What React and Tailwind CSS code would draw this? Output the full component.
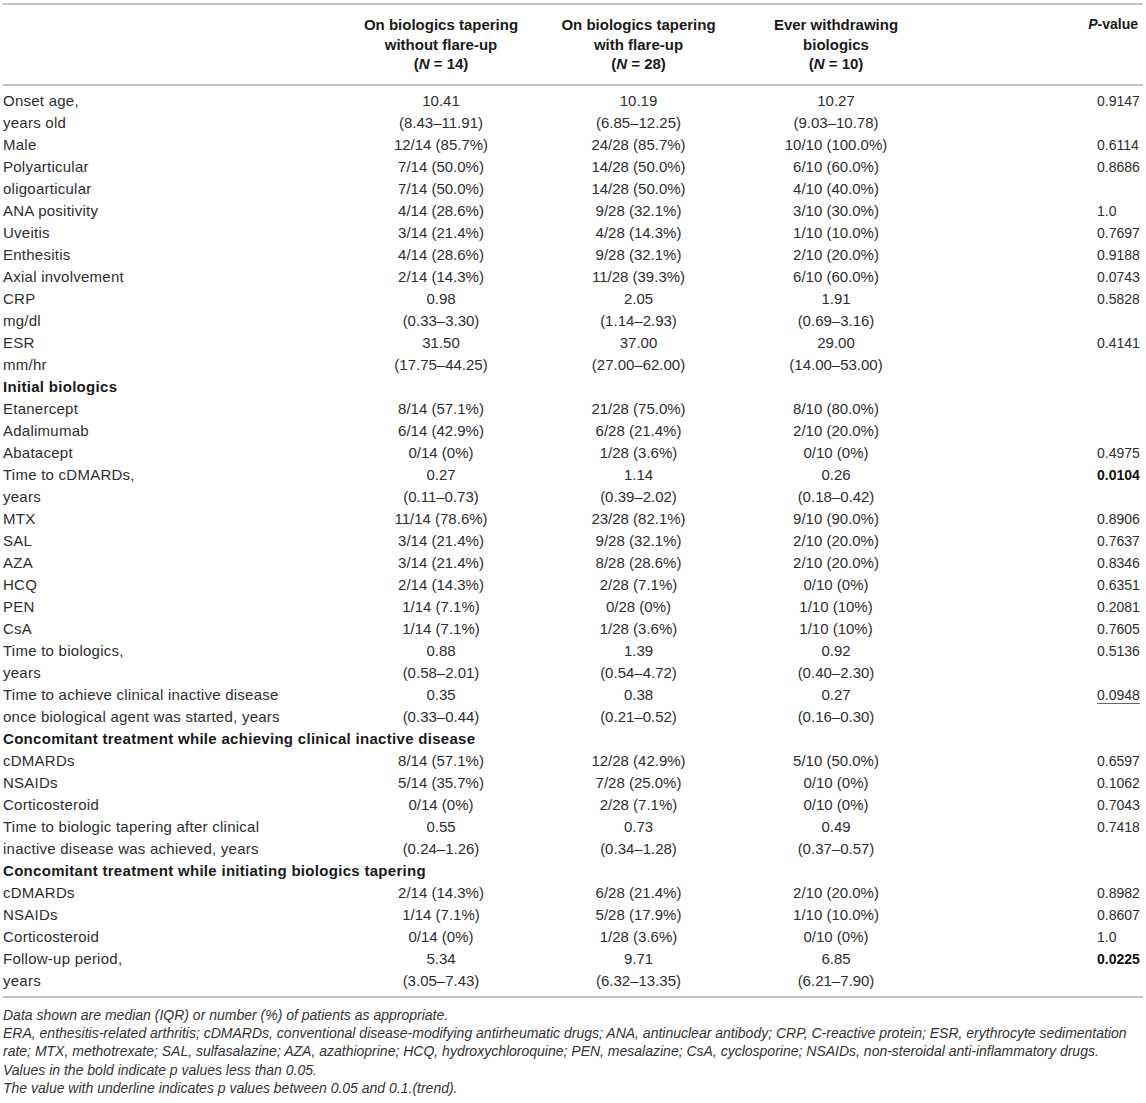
const rows = [
  { label: ["Onset age,", "years old"], a: ["10.41", "(8.43–11.91)"], b: ["10.19", "(6.85–12.25)"], c: ["10.27", "(9.03–10.78)"], p: "0.9147" },
  { label: ["Male"], a: ["12/14 (85.7%)"], b: ["24/28 (85.7%)"], c: ["10/10 (100.0%)"], p: "0.6114" },
  { label: ["Polyarticular"], a: ["7/14 (50.0%)"], b: ["14/28 (50.0%)"], c: ["6/10 (60.0%)"], p: "0.8686" },
  { label: ["oligoarticular"], a: ["7/14 (50.0%)"], b: ["14/28 (50.0%)"], c: ["4/10 (40.0%)"], p: "" },
  { label: ["ANA positivity"], a: ["4/14 (28.6%)"], b: ["9/28 (32.1%)"], c: ["3/10 (30.0%)"], p: "1.0" },
  { label: ["Uveitis"], a: ["3/14 (21.4%)"], b: ["4/28 (14.3%)"], c: ["1/10 (10.0%)"], p: "0.7697" },
  { label: ["Enthesitis"], a: ["4/14 (28.6%)"], b: ["9/28 (32.1%)"], c: ["2/10 (20.0%)"], p: "0.9188" },
  { label: ["Axial involvement"], a: ["2/14 (14.3%)"], b: ["11/28 (39.3%)"], c: ["6/10 (60.0%)"], p: "0.0743" },
  { label: ["CRP", "mg/dl"], a: ["0.98", "(0.33–3.30)"], b: ["2.05", "(1.14–2.93)"], c: ["1.91", "(0.69–3.16)"], p: "0.5828" },
  { label: ["ESR", "mm/hr"], a: ["31.50", "(17.75–44.25)"], b: ["37.00", "(27.00–62.00)"], c: ["29.00", "(14.00–53.00)"], p: "0.4141" },
  { section: "Initial biologics" },
  { label: ["Etanercept"], a: ["8/14 (57.1%)"], b: ["21/28 (75.0%)"], c: ["8/10 (80.0%)"], p: "" },
  { label: ["Adalimumab"], a: ["6/14 (42.9%)"], b: ["6/28 (21.4%)"], c: ["2/10 (20.0%)"], p: "" },
  { label: ["Abatacept"], a: ["0/14 (0%)"], b: ["1/28 (3.6%)"], c: ["0/10 (0%)"], p: "0.4975" },
  { label: ["Time to cDMARDs,", "years"], a: ["0.27", "(0.11–0.73)"], b: ["1.14", "(0.39–2.02)"], c: ["0.26", "(0.18–0.42)"], p: "0.0104", bold: true },
  { label: ["MTX"], a: ["11/14 (78.6%)"], b: ["23/28 (82.1%)"], c: ["9/10 (90.0%)"], p: "0.8906" },
  { label: ["SAL"], a: ["3/14 (21.4%)"], b: ["9/28 (32.1%)"], c: ["2/10 (20.0%)"], p: "0.7637" },
  { label: ["AZA"], a: ["3/14 (21.4%)"], b: ["8/28 (28.6%)"], c: ["2/10 (20.0%)"], p: "0.8346" },
  { label: ["HCQ"], a: ["2/14 (14.3%)"], b: ["2/28 (7.1%)"], c: ["0/10 (0%)"], p: "0.6351" },
  { label: ["PEN"], a: ["1/14 (7.1%)"], b: ["0/28 (0%)"], c: ["1/10 (10%)"], p: "0.2081" },
  { label: ["CsA"], a: ["1/14 (7.1%)"], b: ["1/28 (3.6%)"], c: ["1/10 (10%)"], p: "0.7605" },
  { label: ["Time to biologics,", "years"], a: ["0.88", "(0.58–2.01)"], b: ["1.39", "(0.54–4.72)"], c: ["0.92", "(0.40–2.30)"], p: "0.5136" },
  { label: ["Time to achieve clinical inactive disease", "once biological agent was started, years"], a: ["0.35", "(0.33–0.44)"], b: ["0.38", "(0.21–0.52)"], c: ["0.27", "(0.16–0.30)"], p: "0.0948", underline: true },
  { section: "Concomitant treatment while achieving clinical inactive disease" },
  { label: ["cDMARDs"], a: ["8/14 (57.1%)"], b: ["12/28 (42.9%)"], c: ["5/10 (50.0%)"], p: "0.6597" },
  { label: ["NSAIDs"], a: ["5/14 (35.7%)"], b: ["7/28 (25.0%)"], c: ["0/10 (0%)"], p: "0.1062" },
  { label: ["Corticosteroid"], a: ["0/14 (0%)"], b: ["2/28 (7.1%)"], c: ["0/10 (0%)"], p: "0.7043" },
  { label: ["Time to biologic tapering after clinical", "inactive disease was achieved, years"], a: ["0.55", "(0.24–1.26)"], b: ["0.73", "(0.34–1.28)"], c: ["0.49", "(0.37–0.57)"], p: "0.7418" },
  { section: "Concomitant treatment while initiating biologics tapering" },
  { label: ["cDMARDs"], a: ["2/14 (14.3%)"], b: ["6/28 (21.4%)"], c: ["2/10 (20.0%)"], p: "0.8982" },
  { label: ["NSAIDs"], a: ["1/14 (7.1%)"], b: ["5/28 (17.9%)"], c: ["1/10 (10.0%)"], p: "0.8607" },
  { label: ["Corticosteroid"], a: ["0/14 (0%)"], b: ["1/28 (3.6%)"], c: ["0/10 (0%)"], p: "1.0" },
  { label: ["Follow-up period,", "years"], a: ["5.34", "(3.05–7.43)"], b: ["9.71", "(6.32–13.35)"], c: ["6.85", "(6.21–7.90)"], p: "0.0225", bold: true },
];

const cols = "grid grid-cols-[339px_198px_197px_198px_1fr]";

function Lines({ lines, className }) {
  return (
    <div className={className}>
      {lines.map((l, i) => (
        <div key={i}>{l}</div>
      ))}
    </div>
  );
}

function PCell({ value, bold, underline }) {
  return (
    <div className="flex justify-end pr-[5px]">
      <div className="w-[41px] text-left text-[14px]">
        <span
          className={
            (bold ? "font-bold text-[#111] " : "") +
            (underline ? "underline decoration-[#666] underline-offset-[3px] " : "")
          }
        >
          {value}
        </span>
      </div>
    </div>
  );
}

export default function App() {
  return (
    <div className="bg-white text-[#2e2e2e] font-['Liberation_Sans',Arial,sans-serif] px-[3px] pt-[3px] w-[1146px]">
      {/* Header */}
      <div className={`${cols} border-t-2 border-b-2 border-[#c4c4c4] pt-[10px] pb-[10px] text-[15px] leading-[19.5px] font-bold text-[#1a1a1a]`}>
        <div />
        <div className="text-center">
          <div>On biologics tapering</div>
          <div>without flare-up</div>
          <div>
            (<i>N</i> = 14)
          </div>
        </div>
        <div className="text-center">
          <div>On biologics tapering</div>
          <div>with flare-up</div>
          <div>
            (<i>N</i> = 28)
          </div>
        </div>
        <div className="text-center">
          <div>Ever withdrawing</div>
          <div>biologics</div>
          <div>
            (<i>N</i> = 10)
          </div>
        </div>
        <div className="flex justify-end pr-[5px] text-[14px]">
          <div>
            <i>P</i>-value
          </div>
        </div>
      </div>

      {/* Body */}
      <div className="border-b-2 border-[#c4c4c4] py-[4px] text-[15px] leading-[22px]">
        {rows.map((r, i) =>
          r.section ? (
            <div key={i} className="font-bold text-[#1a1a1a] whitespace-nowrap tracking-[0.3px]">
              {r.section}
            </div>
          ) : (
            <div key={i} className={cols}>
              <Lines lines={r.label} className="whitespace-nowrap tracking-[0.25px]" />
              <Lines lines={r.a} className="text-center" />
              <Lines lines={r.b} className="text-center" />
              <Lines lines={r.c} className="text-center" />
              <PCell value={r.p} bold={r.bold} underline={r.underline} />
            </div>
          )
        )}
      </div>

      {/* Footnotes */}
      <div className="pt-[8px] pb-[6px] text-[14px] leading-[18.4px] italic text-[#333] whitespace-nowrap">
        <p>Data shown are median (IQR) or number (%) of patients as appropriate.</p>
        <p>
          ERA, enthesitis-related arthritis; cDMARDs, conventional disease-modifying antirheumatic drugs; ANA,
          antinuclear antibody; CRP, C-reactive protein; ESR, erythrocyte sedimentation
          <br />
          rate; MTX, methotrexate; SAL, sulfasalazine; AZA, azathioprine; HCQ, hydroxychloroquine; PEN, mesalazine;
          CsA, cyclosporine; NSAIDs, non-steroidal anti-inflammatory drugs.
        </p>
        <p>Values in the bold indicate p values less than 0.05.</p>
        <p>The value with underline indicates p values between 0.05 and 0.1.(trend).</p>
      </div>
    </div>
  );
}
